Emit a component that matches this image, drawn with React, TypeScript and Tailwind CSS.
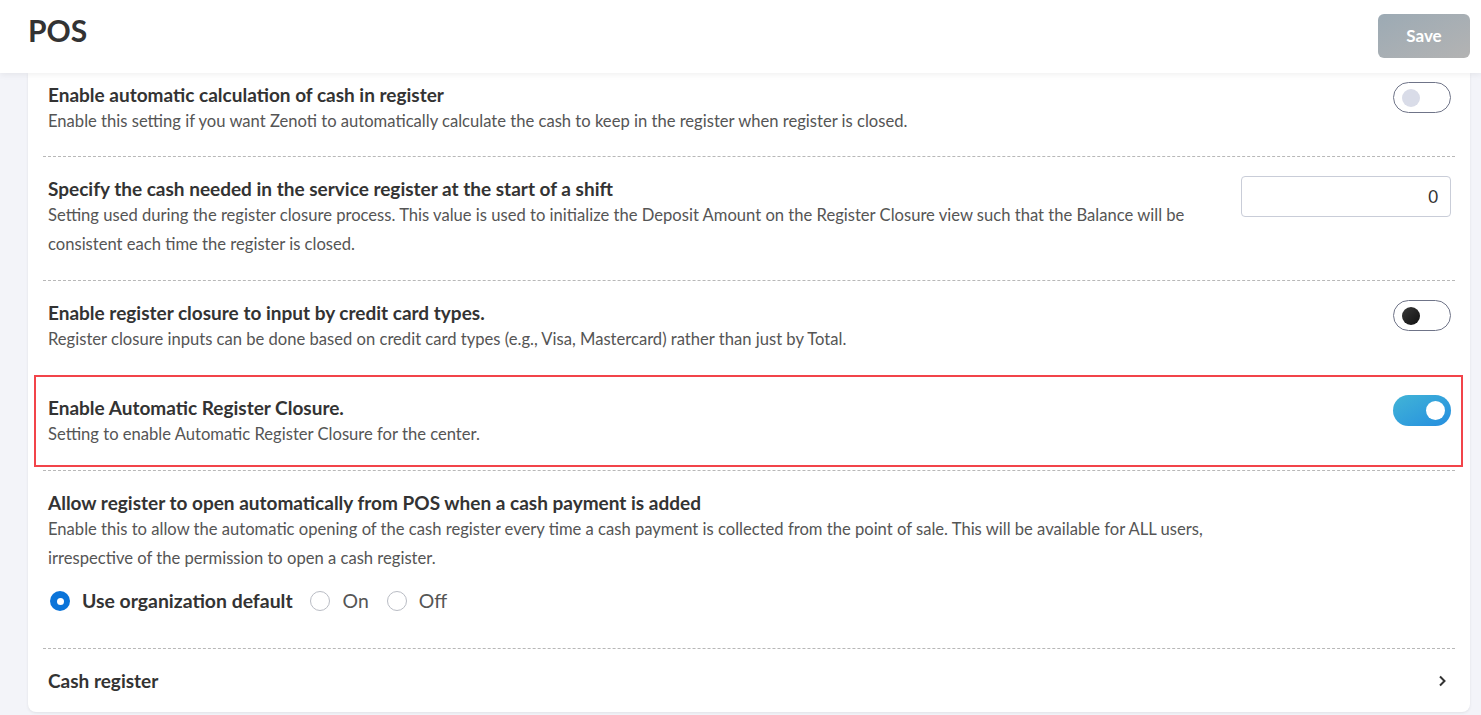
import React from 'react';

type ToggleKind = 'off' | 'dark' | 'on';

function Toggle({ kind }: { kind: ToggleKind }) {
  if (kind === 'on') {
    return (
      <div className="flex h-[31px] w-[58px] shrink-0 items-center justify-end rounded-full bg-gradient-to-br from-[#42b4d6] to-[#268edf] pr-[6px]">
        <span className="h-[19px] w-[19px] rounded-full bg-white" />
      </div>
    );
  }
  return (
    <div className="flex h-[31px] w-[58px] shrink-0 items-center rounded-full border border-[#6f7488] bg-white pl-[8px]">
      <span
        className={
          kind === 'dark'
            ? 'h-[18px] w-[18px] rounded-full bg-gradient-to-br from-[#3a3a3a] to-[#111]'
            : 'h-[18px] w-[18px] rounded-full bg-[#d9dce8]'
        }
      />
    </div>
  );
}

function Radio({ checked }: { checked?: boolean }) {
  if (checked) {
    return (
      <span className="flex h-[20px] w-[20px] items-center justify-center rounded-full bg-[#0b74d9]">
        <span className="h-[7px] w-[7px] rounded-full bg-white" />
      </span>
    );
  }
  return <span className="h-[20px] w-[20px] rounded-full border border-[#b9bcc4] bg-white" />;
}

const sep = 'border-b border-dashed border-[#b8b8b8]';
const title = 'text-[19px] font-bold leading-[25px] text-[#333]';
const desc = 'text-[16.6px] leading-[29px] text-[#555]';
const row = `flex items-start justify-between pb-[21px] pl-[5px] pr-[4px] pt-[19px] ${sep}`;

export default function App() {
  return (
    <main
      className="min-h-screen bg-[#f3f4f9] text-[#333]"
      style={{ fontFamily: 'Lato, "Open Sans", sans-serif' }}
    >
      {/* header */}
      <header className="relative z-10 flex h-[73px] items-center justify-between bg-white pl-[28px] pr-[11px] shadow-[0_2px_6px_rgba(0,0,0,0.06)]">
        <h1 className="mb-[13px] text-[30px] font-bold leading-none text-[#333]">POS</h1>
        <button className="mb-[2px] h-[44px] w-[92px] rounded-[6px] bg-gradient-to-br from-[#9caab4] to-[#b3b3b3] text-[17px] font-bold text-white">
          Save
        </button>
      </header>

      {/* settings card */}
      <section className="ml-[28px] mr-[11px] rounded-b-[8px] bg-white px-[15px] shadow-[0_1px_3px_rgba(0,0,0,0.08)]">
        <div className={`flex items-start justify-between pb-[20px] pl-[5px] pr-[4px] pt-[9px] ${sep}`}>
          <div className="max-w-[1170px]">
            <h2 className={title}>Enable automatic calculation of cash in register</h2>
            <p className={desc}>
              Enable this setting if you want Zenoti to automatically calculate the cash to keep in the register when register is closed.
            </p>
          </div>
          <Toggle kind="off" />
        </div>

        <div className={row}>
          <div className="max-w-[1170px]">
            <h2 className={title}>Specify the cash needed in the service register at the start of a shift</h2>
            <p className={desc}>
              Setting used during the register closure process. This value is used to initialize the Deposit Amount on the Register Closure view such that the Balance will be consistent each time the register is closed.
            </p>
          </div>
          <div className="flex h-[41px] w-[210px] shrink-0 items-center justify-end rounded-[4px] border border-[#c9cdd8] pr-[12px] text-[17px] text-[#333]">
            0
          </div>
        </div>

        <div className={row}>
          <div className="max-w-[1170px]">
            <h2 className={title}>Enable register closure to input by credit card types.</h2>
            <p className={desc}>
              Register closure inputs can be done based on credit card types (e.g., Visa, Mastercard) rather than just by Total.
            </p>
          </div>
          <Toggle kind="dark" />
        </div>

        <div className={`relative ${row}`}>
          <div className="max-w-[1170px]">
            <h2 className={title}>Enable Automatic Register Closure.</h2>
            <p className={desc}>Setting to enable Automatic Register Closure for the center.</p>
          </div>
          <Toggle kind="on" />
          {/* highlight annotation */}
          <div className="pointer-events-none absolute left-[-9px] right-[-8px] top-[-1px] bottom-[3px] border-2 border-[#f2444a]" />
        </div>

        <div className={`pb-[33px] pl-[5px] pr-[4px] pt-[19px] ${sep}`}>
          <div className="max-w-[1170px]">
            <h2 className={title}>Allow register to open automatically from POS when a cash payment is added</h2>
            <p className={desc}>
              Enable this to allow the automatic opening of the cash register every time a cash payment is collected from the point of sale. This will be available for ALL users, irrespective of the permission to open a cash register.
            </p>
          </div>
          <div className="mt-[14px] flex h-[28px] items-center pl-[2px] text-[19.4px]">
            <label className="flex items-center gap-[12px]">
              <Radio checked />
              <span className="font-bold text-[#333]">Use organization default</span>
            </label>
            <label className="ml-[17px] flex items-center gap-[13px]">
              <Radio />
              <span className="text-[#555]">On</span>
            </label>
            <label className="ml-[18px] flex items-center gap-[12px]">
              <Radio />
              <span className="text-[#555]">Off</span>
            </label>
          </div>
        </div>

        <div className="flex items-center justify-between pb-[19px] pl-[5px] pr-[4px] pt-[19px]">
          <h2 className={title}>Cash register</h2>
          <svg width="12" height="12" viewBox="0 0 12 12" className="mr-[3px]">
            <path d="M4 1.5 L8.5 6 L4 10.5" fill="none" stroke="#333" strokeWidth="2" />
          </svg>
        </div>
      </section>
    </main>
  );
}
